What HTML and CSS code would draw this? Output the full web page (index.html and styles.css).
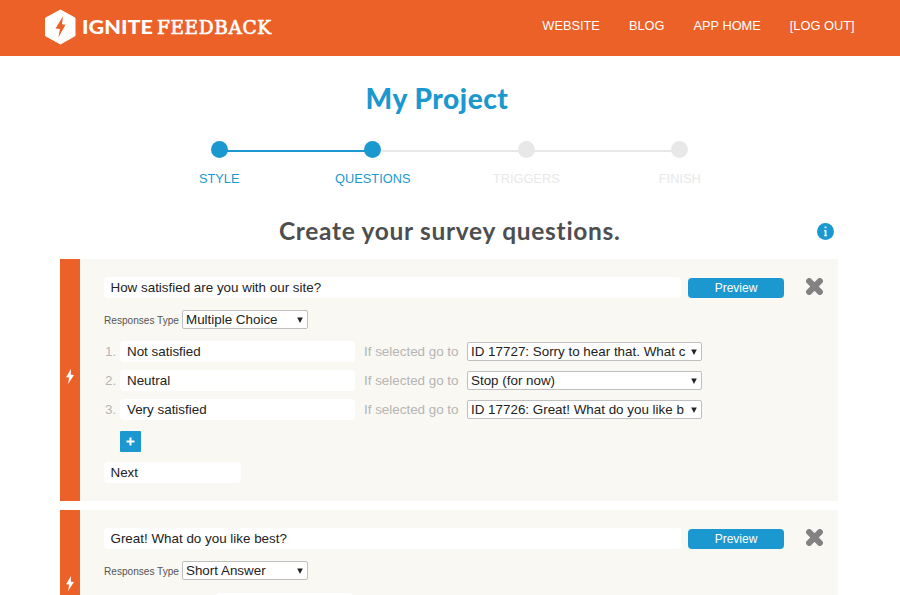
FILE: index.html
```html
<!DOCTYPE html>
<html lang="en">
<head>
<meta charset="utf-8">
<title>Ignite Feedback</title>
<link rel="stylesheet" href="styles.css">
</head>
<body>
<svg width="0" height="0" class="symbols">
  <symbol id="bolt" viewBox="0 0 10 16"><path d="M6 0 0.8 8.7 4.1 9.1 3 16 9.2 6.5 5.9 6Z"/></symbol>
  <symbol id="cross" viewBox="0 0 16 16"><path d="M3 3 13 13M13 3 3 13" stroke-width="5.800" stroke-linecap="round"/></symbol>
  <symbol id="caret" viewBox="0 0 6 6"><path d="M0.2 0.5H5.8L3 6Z"/></symbol>
</svg>
<header class="top">
  <svg class="logo" width="230" height="40" viewBox="0 0 230 40">
    <path d="M16.500 3 31 11V28.800L16.500 37 1.500 28.800V11Z" fill="#fff" stroke="#fff" stroke-linejoin="round"/>
    <path d="M19 9.200 11.500 21.500 16 22 14.400 30.500 21.500 17.700 18 17.200Z" fill="#eb6128"/>
    <text class="logo-sans" x="38" y="27" textLength="71" lengthAdjust="spacingAndGlyphs">IGNITE</text>
    <text class="logo-slab" x="113" y="26.500" textLength="114" lengthAdjust="spacing">FEEDBACK</text>
  </svg>
  <nav class="nav"><a>WEBSITE</a><a>BLOG</a><a>APP HOME</a><a>[LOG OUT]</a></nav>
</header>
<main>
  <h1>My Project</h1>
  <ol class="steps">
    <li class="done linked"><i></i><span>STYLE</span></li>
    <li class="done"><i></i><span>QUESTIONS</span></li>
    <li><i></i><span>TRIGGERS</span></li>
    <li><i></i><span>FINISH</span></li>
  </ol>
  <div class="heading">
    <h2>Create your survey questions.</h2>
    <svg class="info" width="17" height="17" viewBox="0 0 17 17"><circle cx="8.500" cy="8.500" r="8.500" fill="#1b98d0"/><path d="M7.500 3.500H9.500V5.300H7.500ZM7 7H9.500V12H10.200V13.300H7V12H7.700V8.200H7Z" fill="#d9f0fa"/></svg>
  </div>
  <section class="card">
    <div class="rail"><svg width="10" height="15"><use href="#bolt"/></svg></div>
    <div class="content">
      <div class="question">
        <div class="field">How satisfied are you with our site?</div>
        <div class="preview">Preview</div>
        <svg class="remove" width="17" height="17"><use href="#cross"/></svg>
      </div>
      <div class="type"><label>Responses Type</label><div class="select"><span>Multiple Choice</span><svg width="6" height="6"><use href="#caret"/></svg></div></div>
      <div class="answers">
        <div class="answer"><b>1.</b><div class="field">Not satisfied</div><em>If selected go to</em><div class="select"><span>ID 17727: Sorry to hear that. What c</span><svg width="6" height="6"><use href="#caret"/></svg></div></div>
        <div class="answer"><b>2.</b><div class="field">Neutral</div><em>If selected go to</em><div class="select"><span>Stop (for now)</span><svg width="6" height="6"><use href="#caret"/></svg></div></div>
        <div class="answer"><b>3.</b><div class="field">Very satisfied</div><em>If selected go to</em><div class="select"><span>ID 17726: Great! What do you like b</span><svg width="6" height="6"><use href="#caret"/></svg></div></div>
      </div>
      <div class="add"><svg width="9" height="9" viewBox="0 0 9 9"><path d="M4.500 0.500V8.500M0.500 4.500H8.500" stroke="#fff" stroke-width="2"/></svg></div>
      <div class="field next">Next</div>
    </div>
  </section>
  <section class="card second">
    <div class="rail"><svg width="10" height="15"><use href="#bolt"/></svg></div>
    <div class="content">
      <div class="question">
        <div class="field">Great! What do you like best?</div>
        <div class="preview">Preview</div>
        <svg class="remove" width="17" height="17"><use href="#cross"/></svg>
      </div>
      <div class="type"><label>Responses Type</label><div class="select"><span>Short Answer</span><svg width="6" height="6"><use href="#caret"/></svg></div></div>
      <div class="field limit"></div>
    </div>
  </section>
</main>
</body>
</html>
```
FILE: styles.css
```css
* { box-sizing: border-box; }
html, body { margin: 0; height: 595px; overflow: hidden; }
body { background: #fff; color: #222; font-family: "Liberation Sans", Arial, sans-serif; font-size: 13.4px; }
svg { display: block; flex: none; }
.symbols { position: absolute; }
.top { height: 56px; background: #eb6128; display: flex; justify-content: space-between; padding: 7px 45.500px 0 44px; }
.logo { overflow: visible; }
.logo-sans { font: 900 19.500px Lato, sans-serif; fill: #fff; }
.logo-slab { font: 18.500px "DejaVu Serif", serif; fill: #fff; stroke: #fff; stroke-width: .7px; }
.nav { display: flex; gap: 29px; padding-top: 11px; color: #fff; font-size: 12.8px; line-height: 16px; }
h1, h2 { margin: 0; font-family: Lato, sans-serif; text-align: center; white-space: nowrap; }
h1 { height: 44px; margin-top: 20px; padding-right: 26px; color: #1b98d0; font-weight: 900; font-size: 28px; line-height: 44px; letter-spacing: .55px; }
.steps { display: grid; grid-template-columns: repeat(4, 153.500px); margin: 21px 0 0 142.500px; padding: 0; list-style: none; font-size: 12.8px; color: #e8e8e8; }
.steps li { display: flex; flex-direction: column; align-items: center; gap: 12px; line-height: 17px; background: linear-gradient(#e8e8e8, #e8e8e8) 0 9px / 100% 2px no-repeat; }
.steps li:first-child { background-position: 77px 9px; }
.steps li:last-child { background-size: 50% 2px; }
.steps i { width: 17px; height: 17px; border-radius: 50%; background: #e8e8e8; }
.steps .done { color: #1b98d0; }
.steps .done i { background: #1b98d0; }
.steps .linked { background-image: linear-gradient(#1b98d0, #1b98d0); }
.steps .linked + .done { background-image: linear-gradient(90deg, #1b98d0 50%, #e8e8e8 50%); }
.heading { display: grid; grid-template-columns: 1fr 83.500px; align-items: center; height: 40px; margin-top: 24px; }
h2 { padding-left: 83px; color: #4d4e50; font-size: 24.500px; line-height: 40px; letter-spacing: .7px; }
.card { display: flex; width: 778px; height: 242px; margin: 8px 0 0 60px; background: linear-gradient(90deg, #f9f8f3, #f9f8f3); }
.second { margin-top: 9px; }
.rail { width: 20.400px; background: #eb6128; display: flex; justify-content: center; align-items: flex-start; padding-top: 110px; fill: #fff; flex: none; }
.second .rail { padding-top: 66px; }
.content { padding: 18px 0 0 23.600px; flex: 1; }
.field { height: 21px; background: #fff; border-radius: 4px; padding: 0 6.500px; line-height: 21px; white-space: nowrap; }
.question { display: flex; align-items: flex-start; }
.question .field { width: 577px; }
.preview { width: 96px; height: 20px; margin: 1px 0 0 7px; border-radius: 4px; background: #1b98d0; color: #fff; font-size: 12px; line-height: 20px; text-align: center; }
.remove { margin: .500px 0 0 22.500px; stroke: #828282; }
.type { display: flex; align-items: center; height: 19px; margin-top: 12px; }
.type label { width: 78px; color: #555; font-size: 10.1px; line-height: 19px; padding-top: 2px; }
.select { display: flex; align-items: center; justify-content: space-between; width: 126px; height: 19px; padding: 0 4px 0 3px; border: 1px solid #bfbfbf; border-radius: 2px; background: #fff; line-height: 17px; fill: #222; }
.select span { white-space: nowrap; }
.answers { display: flex; flex-direction: column; gap: 8.200px; margin-top: 12px; }
.answer { display: flex; align-items: center; height: 21px; }
.answer b, .answer em { font-weight: normal; font-style: normal; color: #b5b5b3; }
.answer b { width: 16px; padding-left: 1px; }
.answer .field { width: 235px; padding-left: 7px; }
.answer em { width: 103px; margin-left: 9px; }
.answer .select { width: 235px; }
.add { display: flex; align-items: center; justify-content: center; width: 21px; height: 21px; margin: 11px 0 0 16px; border-radius: 1px; background: #1b98d0; }
.next { width: 137px; margin-top: 9.500px; }
.limit { width: 137px; margin: 13px 0 0 112px; }
```
